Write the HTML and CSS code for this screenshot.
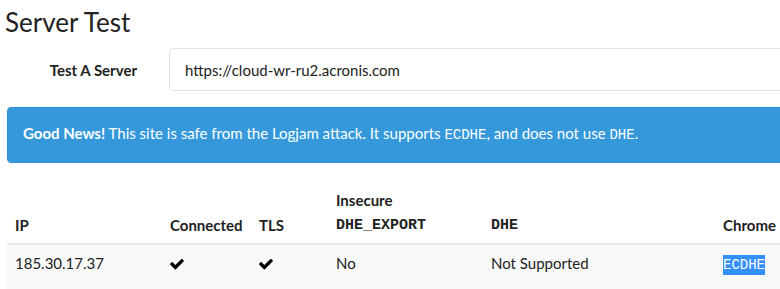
FILE: index.html
```html
<!DOCTYPE html>
<html>
<head>
    <title>Server Test</title>
    <link rel="stylesheet" href="styles.css">
</head>
<body>
    <div class="page">
        <h1 class="title">Server Test</h1>

        <div class="form-row">
            <label class="form-label" for="server">Test A Server</label>
            <input class="form-input" id="server" type="text" value="https://cloud-wr-ru2.acronis.com">
        </div>

        <div class="alert">
            <strong>Good News!</strong> This site is safe from the Logjam attack. It supports <code>ECDHE</code>, and does not use <code>DHE</code>.
        </div>

        <table class="results">
            <thead>
                <tr>
                    <th class="col-ip">IP</th>
                    <th class="col-conn">Connected</th>
                    <th class="col-tls">TLS</th>
                    <th class="col-export">Insecure<br><code>DHE_EXPORT</code></th>
                    <th class="col-dhe"><code>DHE</code></th>
                    <th class="col-chrome">Chrome</th>
                </tr>
            </thead>
            <tbody>
                <tr>
                    <td>185.30.17.37</td>
                    <td><svg class="check" viewBox="110 390 1580 1150"><path d="M1671 566q0 40-28 68l-724 724-136 136q-28 28-68 28t-68-28l-136-136-362-362q-28-28-28-68t28-68l136-136q28-28 68-28t68 28l294 295 656-657q28-28 68-28t68 28l136 136q28 28 28 68z"/></svg></td>
                    <td><svg class="check" viewBox="110 390 1580 1150"><path d="M1671 566q0 40-28 68l-724 724-136 136q-28 28-68 28t-68-28l-136-136-362-362q-28-28-28-68t28-68l136-136q28-28 68-28t68 28l294 295 656-657q28-28 68-28t68 28l136 136q28 28 28 68z"/></svg></td>
                    <td>No</td>
                    <td>Not Supported</td>
                    <td><code class="selected">ECDHE</code></td>
                </tr>
            </tbody>
        </table>
    </div>
</body>
</html>
```

FILE: styles.css
```css
body {
    margin: 0;
    font-family: 'Lato', sans-serif;
    font-size: 15px;
    color: #222;
    background-color: #fff;
}
.page {
    padding: 0 0 0 7px;
    overflow: hidden;
}
.title {
    margin: 7px 0 10px -2px;
    font-size: 26px;
    line-height: 31px;
    font-weight: normal;
}
.form-row {
    display: flex;
    align-items: center;
    gap: 32px;
}
.form-label {
    width: 130px;
    text-align: right;
    font-weight: bold;
}
.form-input {
    flex: 1;
    margin-right: -30px;
    height: 43px;
    box-sizing: border-box;
    padding: 10px 15px;
    border: 1px solid #dce4ec;
    border-radius: 4px;
    font-family: 'Lato', sans-serif;
    font-size: 15px;
    color: #222;
}
.alert {
    margin: 16px -30px 0 0;
    padding: 14px 15px 16px;
    line-height: 22px;
    background-color: #3598db;
    border: 1px solid #2d90d8;
    border-radius: 4px;
    color: #fff;
}
code {
    font-family: 'Liberation Mono', monospace;
    font-size: 14px;
}
.results {
    margin-top: 18px;
    border-collapse: collapse;
    width: 800px;
}
.results th,
.results td {
    padding: 8px 8px 6px;
    text-align: left;
    vertical-align: bottom;
    line-height: 23px;
}
.results th {
    border-bottom: 2px solid #e6e9ed;
    font-weight: bold;
}
.results th code {
    font-weight: bold;
    font-size: 15px;
}
.results td {
    padding: 7px 8px 14px;
    vertical-align: top;
    line-height: 22px;
    background-color: #f9f9f9;
}
.col-ip { width: 139px; }
.col-conn { width: 73px; }
.col-tls { width: 61px; }
.col-export { width: 139px; }
.col-dhe { width: 216px; }
.check {
    width: 14px;
    height: 11px;
    vertical-align: -1px;
}
.selected {
    background-color: #3390ff;
    color: #fff;
    padding: 2px 0;
}
```
